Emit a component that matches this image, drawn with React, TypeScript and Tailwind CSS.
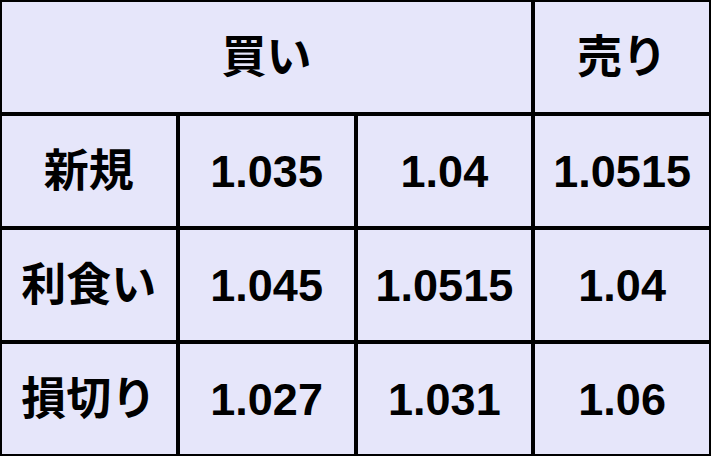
const rows = [
  ["新規", "1.035", "1.04", "1.0515"],
  ["利食い", "1.045", "1.0515", "1.04"],
  ["損切り", "1.027", "1.031", "1.06"],
];

const Cell = ({ children, span }: { children: React.ReactNode; span?: boolean }) => (
  <div
    className={`${span ? "col-span-3" : ""} flex items-center justify-center bg-[#e6e6fa] text-black text-[45px] font-bold leading-none`}
  >
    {children}
  </div>
);

export default function App() {
  return (
    <div className="w-[711px] h-[456px] border-2 border-black bg-black font-['Liberation_Sans','Noto_Sans_CJK_JP',sans-serif]">
      <div className="grid grid-cols-4 grid-rows-[repeat(4,110px)] gap-[4px] h-full">
        <Cell span>買い</Cell>
        <Cell>売り</Cell>
        {rows.map((row) =>
          row.map((v, i) => <Cell key={row[0] + i}>{v}</Cell>)
        )}
      </div>
    </div>
  );
}
